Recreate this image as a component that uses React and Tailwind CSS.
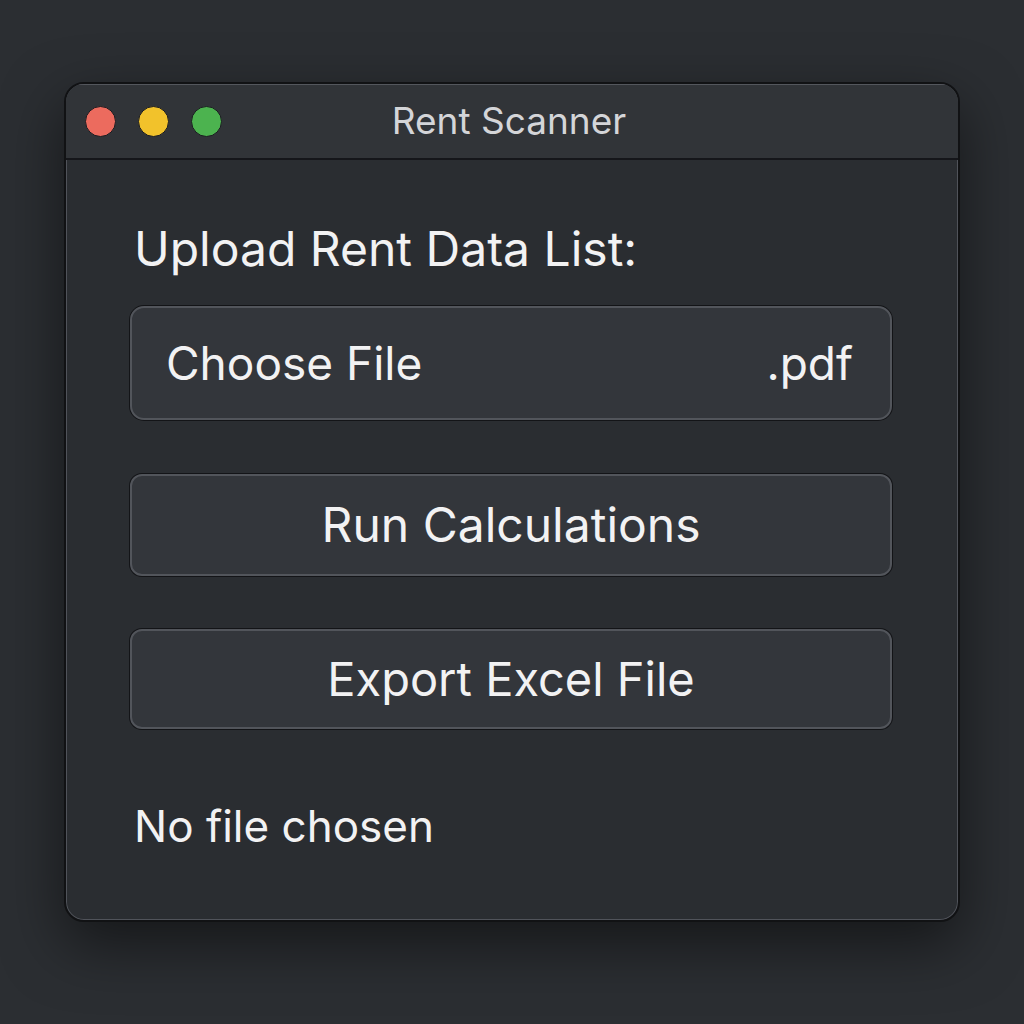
import React from "react";

const Dot = ({ color }) => (
  <span
    className="block w-[31px] h-[31px] rounded-full border border-[#1c1d22]"
    style={{ backgroundColor: color }}
  />
);

const App = () => {
  return (
    <div
      className="w-[1024px] h-[1024px] bg-[#2b2e32] pt-[82px] pl-[64px]"
      style={{ fontFamily: "Inter, 'Noto Sans', sans-serif" }}
    >
      <div className="w-[896px] h-[840px] rounded-[20px] border-2 border-[#111214] bg-[#2a2d31] shadow-[inset_0_0_0_1px_#50535a,0_22px_60px_rgba(0,0,0,0.5)] overflow-hidden flex flex-col">
        {/* title bar */}
        <div className="relative h-[76px] bg-[#313438] border-b-2 border-[#15161a] shadow-[inset_0_1px_0_#54575d] flex items-center pl-[19px] gap-[22px] shrink-0">
          <Dot color="#ec6b5e" />
          <Dot color="#f2c22b" />
          <Dot color="#4cb34f" />
          <div className="absolute inset-0 flex items-center justify-center pr-[6px] text-[37px] text-[#d4d5d8]">
            Rent Scanner
          </div>
        </div>

        {/* body */}
        <div className="flex flex-col pl-[64px] pr-[66px] pt-[60px]">
          <div className="pl-[4px] text-[48px] leading-[58px] text-[#f2f2f3]">
            Upload Rent Data List:
          </div>

          <button className="mt-[28px] h-[114px] rounded-[14px] border-2 border-[#52555b] bg-[#33363b] shadow-[0_0_0_1px_#131417] flex items-center justify-between pl-[34px] pr-[37px] text-[46px] text-[#f2f2f3]">
            <span>Choose File</span>
            <span>.pdf</span>
          </button>

          <button className="mt-[54px] h-[102px] rounded-[12px] border-2 border-[#52555b] bg-[#33363b] shadow-[0_0_0_1px_#131417] flex items-center justify-center text-[48px] text-[#f2f2f3]">
            Run Calculations
          </button>

          <button className="mt-[53px] h-[100px] rounded-[12px] border-2 border-[#52555b] bg-[#33363b] shadow-[0_0_0_1px_#131417] flex items-center justify-center text-[47px] text-[#f2f2f3]">
            Export Excel File
          </button>

          <div className="mt-[69px] pl-[4px] text-[44px] leading-[56px] text-[#f2f2f3]">
            No file chosen
          </div>
        </div>
      </div>
    </div>
  );
};

export default App;
